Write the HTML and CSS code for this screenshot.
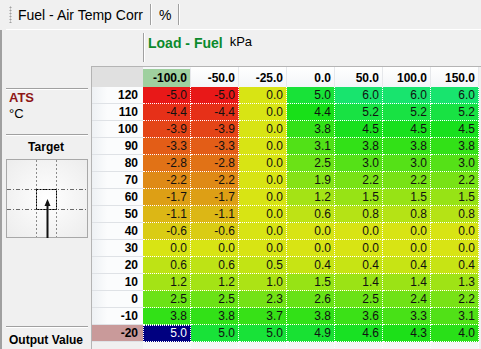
FILE: index.html
```html
<!DOCTYPE html>
<html lang="en">
<head>
    <meta charset="UTF-8">
    <title>Fuel - Air Temp Corr</title>
    <link rel="stylesheet" href="styles.css">
</head>
<body>

    <div class="toolbar">
        <span class="grip"></span>
        <span class="tb-item">Fuel - Air Temp Corr</span>
        <span class="tb-sep"></span>
        <span class="tb-item">%</span>
        <span class="tb-sep"></span>
    </div>

    <div class="main">
        <aside class="side">
            <div class="side-axis">
                <div class="axis-name">ATS</div>
                <div class="axis-unit">°C</div>
            </div>
            <div class="side-target">
                <div class="target-title">Target</div>
                <svg class="target-box" width="82" height="79" viewBox="0 0 82 79">
                    <defs>
                        <radialGradient id="glow" cx="50%" cy="50%" r="70%">
                            <stop offset="0" stop-color="#ffffff"/>
                            <stop offset="1" stop-color="#ececec"/>
                        </radialGradient>
                    </defs>
                    <rect x="0.5" y="0.5" width="81" height="78" fill="url(#glow)" stroke="#a8a8a8"/>
                    <line x1="30.5" y1="1" x2="30.5" y2="78" stroke="#8a8a8a" stroke-dasharray="2 2"/>
                    <line x1="50.5" y1="1" x2="50.5" y2="78" stroke="#8a8a8a" stroke-dasharray="2 2"/>
                    <line x1="1" y1="30.5" x2="81" y2="30.5" stroke="#6a6a6a" stroke-dasharray="4 2 1 2"/>
                    <line x1="1" y1="50.5" x2="81" y2="50.5" stroke="#6a6a6a" stroke-dasharray="4 2 1 2"/>
                    <rect x="30.5" y="30.5" width="20" height="20" fill="none" stroke="#000" stroke-dasharray="2 1"/>
                    <line x1="41.5" y1="79" x2="41.5" y2="46" stroke="#111" stroke-width="2"/>
                    <path d="M41.5 40 L44.5 47 L38.5 47 Z" fill="#111"/>
                </svg>
            </div>
            <div class="side-out">Output Value</div>
        </aside>

        <section class="map">
            <div class="x-axis">
                <span class="x-name">Load - Fuel</span>
                <span class="x-unit">kPa</span>
            </div>
            <div id="grid" class="grid"></div>
        </section>
    </div>

    <script>
        const cols = ['-100.0', '-50.0', '-25.0', '0.0', '50.0', '100.0', '150.0'];
        const rows = [
            ['120', -5.0, -5.0, 0.0, 5.0, 6.0, 6.0, 6.0],
            ['110', -4.4, -4.4, 0.0, 4.4, 5.2, 5.2, 5.2],
            ['100', -3.9, -3.9, 0.0, 3.8, 4.5, 4.5, 4.5],
            ['90', -3.3, -3.3, 0.0, 3.1, 3.8, 3.8, 3.8],
            ['80', -2.8, -2.8, 0.0, 2.5, 3.0, 3.0, 3.0],
            ['70', -2.2, -2.2, 0.0, 1.9, 2.2, 2.2, 2.2],
            ['60', -1.7, -1.7, 0.0, 1.2, 1.5, 1.5, 1.5],
            ['50', -1.1, -1.1, 0.0, 0.6, 0.8, 0.8, 0.8],
            ['40', -0.6, -0.6, 0.0, 0.0, 0.0, 0.0, 0.0],
            ['30', 0.0, 0.0, 0.0, 0.0, 0.0, 0.0, 0.0],
            ['20', 0.6, 0.6, 0.5, 0.4, 0.4, 0.4, 0.4],
            ['10', 1.2, 1.2, 1.0, 1.5, 1.4, 1.4, 1.3],
            ['0', 2.5, 2.5, 2.3, 2.6, 2.5, 2.4, 2.2],
            ['-10', 3.8, 3.8, 3.7, 3.8, 3.6, 3.3, 3.1],
            ['-20', 5.0, 5.0, 5.0, 4.9, 4.6, 4.3, 4.0]
        ];

        // value -> colour, red below zero, yellow at zero, green above
        const stops = [
            [-5, [232, 24, 24]],
            [0, [216, 228, 20]],
            [4.4, [24, 224, 24]],
            [6, [24, 228, 110]]
        ];

        function heat(v) {
            for (let i = 0; i < stops.length - 1; i++) {
                const [a, ca] = stops[i];
                const [b, cb] = stops[i + 1];
                if (v <= b || i === stops.length - 2) {
                    const t = Math.max(0, Math.min(1, (v - a) / (b - a)));
                    const c = ca.map((x, k) => Math.round(x + (cb[k] - x) * t));
                    return 'rgb(' + c.join(',') + ')';
                }
            }
        }

        const grid = document.getElementById('grid');

        function cell(cls, text) {
            const d = document.createElement('div');
            d.className = cls;
            d.textContent = text;
            grid.appendChild(d);
            return d;
        }

        cell('corner', '');
        cols.forEach((c, i) => cell(i === 0 ? 'head active' : 'head', c));

        rows.forEach((r, ri) => {
            const last = ri === rows.length - 1;
            cell(last ? 'label active' : 'label', r[0]);
            r.slice(1).forEach((v, ci) => {
                if (last && ci === 0) {
                    cell('value current', v.toFixed(1));
                } else {
                    cell('value', v.toFixed(1)).style.background = heat(v);
                }
            });
        });

        cell('label pad', '');
        cols.forEach(() => cell('value pad', ''));
    </script>

</body>
</html>
```

FILE: styles.css
```css
* {
    margin: 0;
    padding: 0;
    box-sizing: border-box;
    font-family: "Liberation Sans", Arial, sans-serif;
}

body {
    width: 481px;
    height: 349px;
    overflow: hidden;
    background: #f0f0f0;
    color: #000;
}

/* toolbar */

.toolbar {
    display: flex;
    align-items: center;
    height: 30px;
    margin-left: 6px;
    border-bottom: 1px solid #fff;
    font-size: 14px;
}

.grip {
    width: 3px;
    height: 17px;
    margin: 0 6px 0 3px;
    background: radial-gradient(circle, #a0a0a0 0.8px, transparent 1.2px) 0 0 / 3px 3px;
}

.tb-item {
    padding: 0 7px 0 0;
    line-height: 16px;
}

.tb-sep {
    width: 1px;
    height: 21px;
    margin-right: 8px;
    background: #a0a0a0;
    box-shadow: 1px 0 0 #fff;
}

/* main area */

.main {
    display: flex;
    height: 319px;
    border-left: 2px solid #a0a0a0;
}

.side {
    display: flex;
    flex-direction: column;
    width: 89px;
    padding-top: 58px;
}

.side-axis,
.side-target,
.side-out {
    margin: 0 3px 0 4px;
    border-top: 1px solid #a0a0a0;
    box-shadow: inset 0 1px 0 #fff;
}

.side-axis {
    height: 46px;
    padding: 1px 0 0 3px;
}

.axis-name {
    color: #8e1616;
    font-size: 13px;
    font-weight: bold;
    line-height: 16px;
}

.axis-unit {
    font-size: 13px;
    line-height: 16px;
}

.side-target {
    padding-top: 4px;
}

.target-title {
    text-align: center;
    font-size: 12px;
    font-weight: bold;
    line-height: 16px;
    padding-right: 2px;
}

.target-box {
    display: block;
    margin-top: 4px;
}

.side-out {
    margin-top: auto;
    height: 23px;
    padding: 5px 0 0 3px;
    font-size: 12px;
    font-weight: bold;
    line-height: 16px;
}

/* map */

.map {
    flex: 1;
}

.x-axis {
    display: flex;
    align-items: flex-start;
    height: 29px;
    margin: 3px 0 4px 52px;
    padding: 2px 0 0 4px;
    border-left: 1px solid #a0a0a0;
    box-shadow: inset 1px 0 0 #fff;
}

.x-name {
    color: #0b8a2c;
    font-size: 14px;
    font-weight: bold;
    line-height: 16px;
}

.x-unit {
    margin-left: 7px;
    font-size: 13px;
    line-height: 14px;
}

.grid {
    display: grid;
    grid-template-columns: 51px repeat(7, 48px);
    grid-template-rows: 20px repeat(15, 17px) 8px;
    border-top: 1px solid #b4b4b4;
    border-left: 1px solid #b4b4b4;
    font-size: 12px;
}

.corner {
    background: #e0e0e0;
}

.head {
    padding: 3px 3px 0 0;
    text-align: right;
    font-weight: bold;
    line-height: 16px;
    background: linear-gradient(#ffffff, #f3f5f8);
    border-right: 1px solid #e6e8eb;
}

.head.active {
    background: #9fd09f;
    border-top: 2px solid #f6f8fa;
    padding-top: 1px;
}

.label {
    padding-right: 5px;
    text-align: right;
    font-weight: bold;
    line-height: 16px;
    background: linear-gradient(90deg, #eef1f4, #fbfcfd 30%);
    border-bottom: 1px solid #dfe2e6;
}

.label.active {
    background: #c99a9a;
}

.value {
    padding-right: 3px;
    text-align: right;
    line-height: 16px;
    color: #111;
    border-right: 1px dotted #fff;
    border-bottom: 1px dotted #fff;
}

.value.current {
    background: #000080;
    color: #fff;
    outline: 1px dotted #fff;
    outline-offset: -1px;
}

.label.pad {
    background: #f0f0f0;
    border-bottom: none;
}

.value.pad {
    background: #f6f6f6;
    border-bottom: none;
}
```
